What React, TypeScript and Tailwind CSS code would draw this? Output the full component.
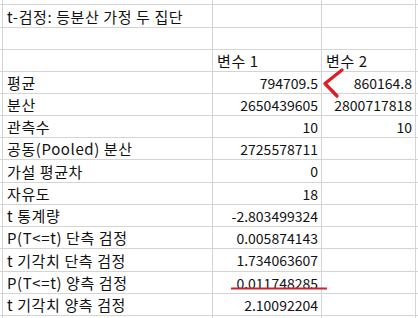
import React from "react";

const rows: [string, string, string][] = [
  ["t-검정: 등분산 가정 두 집단", "", ""],
  ["", "", ""],
  ["", "변수 1", "변수 2"],
  ["평균", "794709.5", "860164.8"],
  ["분산", "2650439605", "2800717818"],
  ["관측수", "10", "10"],
  ["공동(Pooled) 분산", "2725578711", ""],
  ["가설 평균차", "0", ""],
  ["자유도", "18", ""],
  ["t 통계량", "-2.803499324", ""],
  ["P(T<=t) 단측 검정", "0.005874143", ""],
  ["t 기각치 단측 검정", "1.734063607", ""],
  ["P(T<=t) 양측 검정", "0.011748285", ""],
  ["t 기각치 양측 검정", "2.10092204", ""],
];

const cell = "border-r border-b border-[#d4d4d4] flex items-center overflow-visible whitespace-nowrap";

export default function App() {
  return (
    <div
      className="relative w-[418px] h-[318px] overflow-hidden bg-white text-[14px] leading-none text-[#111]"
      style={{ fontFamily: '"Noto Sans CJK KR", "Noto Sans", sans-serif' }}
    >
      <div className="grid grid-cols-[3px_210px_109px_94px_1fr] grid-rows-[5px_23px_22px_22px_22px_22px_22px_22px_23px_22px_22px_22px_23px_22px_22px_10px]">
        <div className={cell} />
        <div className={cell} />
        <div className={cell} />
        <div className={cell} />
        <div className="border-b border-[#d4d4d4]" />
        {rows.map((r, i) => (
          <React.Fragment key={i}>
            <div className={cell} />
            <div className={`${cell} pl-[4px] text-[15px] tracking-[0.6px]`}>{r[0]}</div>
            <div
              className={`${cell} ${i === 2 ? "justify-start pl-[4px] text-[15px] tracking-[0.6px]" : "justify-end pr-[3px]"}`}
            >
              {r[1]}
            </div>
            <div
              className={`${cell} ${i === 2 ? "justify-start pl-[4px] text-[15px] tracking-[0.6px]" : "justify-end pr-[3px]"}`}
            >
              {r[2]}
            </div>
            <div className="border-b border-[#d4d4d4]" />
          </React.Fragment>
        ))}
        <div className={cell} />
        <div className={cell} />
        <div className={cell} />
        <div className={cell} />
        <div />
      </div>
      <svg className="absolute left-0 top-0" width="418" height="318" viewBox="0 0 418 318">
        <polyline
          points="342,70 325,83.5 337,96"
          fill="none"
          stroke="#dc1f26"
          strokeWidth="3.4"
          strokeLinecap="round"
          strokeLinejoin="round"
        />
        <line x1="231" y1="288.5" x2="327" y2="288.5" stroke="#d21f2b" strokeWidth="2.2" />
      </svg>
    </div>
  );
}
